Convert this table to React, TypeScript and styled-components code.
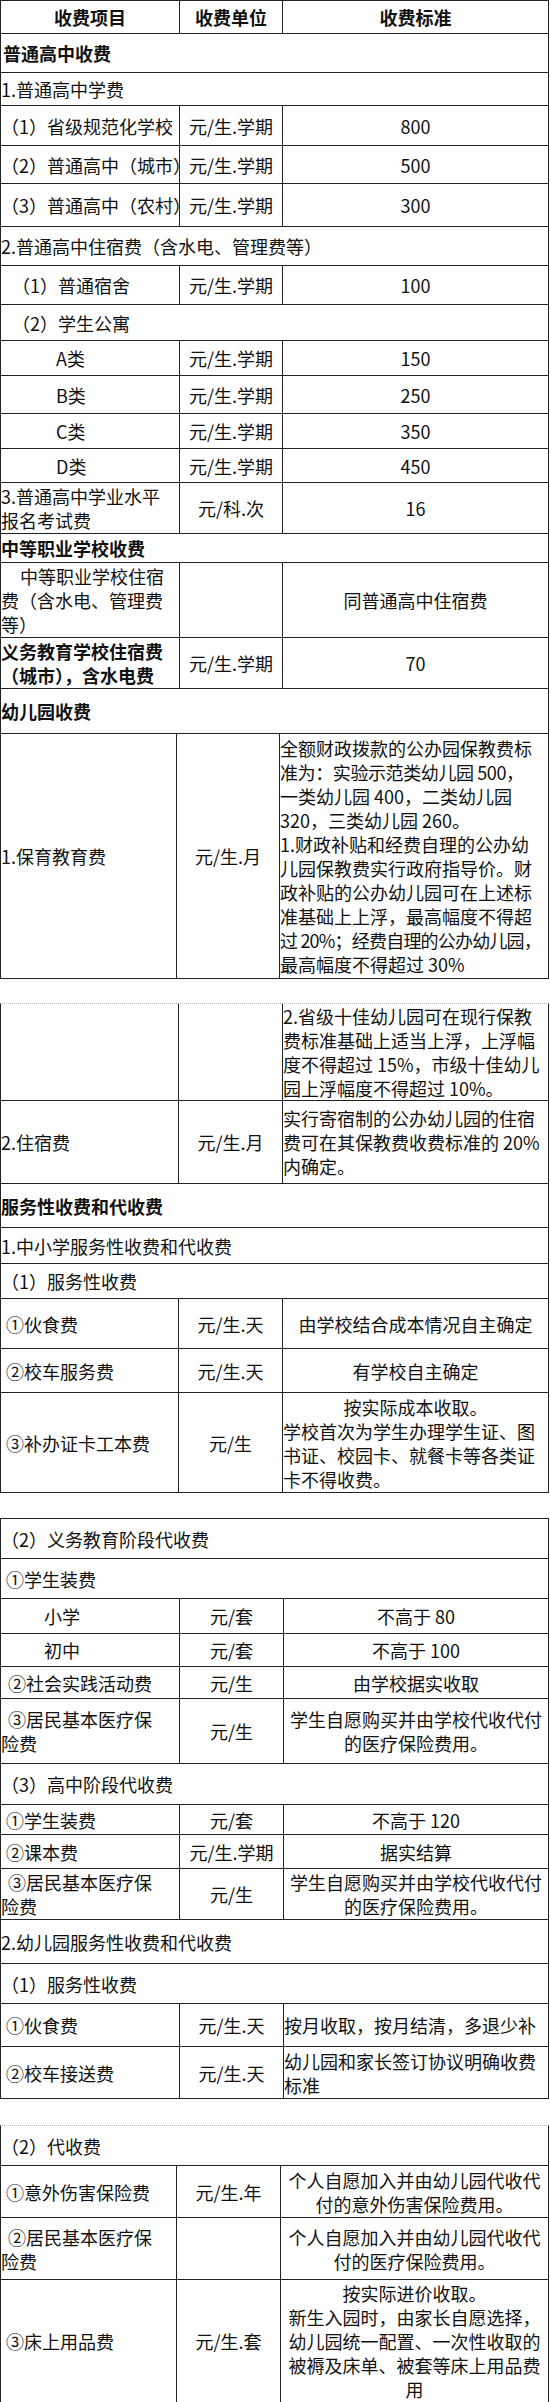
import React from "react";
import styled, { createGlobalStyle, css } from "styled-components";

const GlobalStyle = createGlobalStyle`
  html, body {
    margin: 0;
    padding: 0;
    background: #fff;
  }
  body {
    font-family: "Noto Sans CJK SC", "Noto Sans", sans-serif;
    color: #111;
  }
`;

const Page = styled.div`
  width: 550px;
  font-size: 18px;
  line-height: 24px;
`;

const Table = styled.div<{ $cols: string; $top?: "solid" | "dotted" }>`
  --cols: ${(p) => p.$cols};
  width: 549px;
  box-sizing: border-box;
  border-left: 1px solid #222;
  border-right: 1px solid #222;
  ${(p) =>
    p.$top === "solid" &&
    css`
      border-top: 1px solid #222;
    `}
  ${(p) =>
    p.$top === "dotted" &&
    css`
      border-top: 1px dotted #b4b4b4;
    `}
`;

const Row = styled.div<{ $h: number }>`
  display: grid;
  grid-template-columns: var(--cols);
  height: ${(p) => p.$h}px;
  box-sizing: border-box;
  border-bottom: 1px solid #222;
`;

const Cell = styled.div<{
  $align?: "left" | "center";
  $indent?: number;
  $bold?: boolean;
  $span?: boolean;
}>`
  display: flex;
  flex-direction: column;
  justify-content: center;
  min-width: 0;
  box-sizing: border-box;
  padding-left: ${(p) => p.$indent ?? 0}px;
  text-align: ${(p) => p.$align ?? "left"};
  font-weight: ${(p) => (p.$bold ? 700 : 400)};
  white-space: nowrap;
  border-right: 1px solid #222;
  &:last-child {
    border-right: none;
  }
  ${(p) =>
    p.$span &&
    css`
      grid-column: 1 / -1;
    `}
`;

const Line = styled.div<{ $indent?: number; $squeeze?: number; $center?: boolean }>`
  padding-left: ${(p) => p.$indent ?? 0}px;
  letter-spacing: ${(p) => p.$squeeze ?? 0}px;
  ${(p) =>
    p.$center &&
    css`
      text-align: center;
    `}
`;

const Gap = styled.div<{ $h: number }>`
  height: ${(p) => p.$h}px;
`;

const unitCell = (text: string) => <Cell $align="center">{text}</Cell>;

export default function App() {
  return (
    <Page lang="zh-CN">
      <GlobalStyle />

      <Table $cols="179px 103px 1fr" $top="solid">
        <Row $h={33}>
          <Cell $align="center" $bold>收费项目</Cell>
          <Cell $align="center" $bold>收费单位</Cell>
          <Cell $align="center" $bold>收费标准</Cell>
        </Row>
        <Row $h={39}>
          <Cell $span $bold $indent={2}>普通高中收费</Cell>
        </Row>
        <Row $h={33}>
          <Cell $span>1.普通高中学费</Cell>
        </Row>
        <Row $h={40}>
          <Cell>（1）省级规范化学校</Cell>
          {unitCell("元/生.学期")}
          <Cell $align="center">800</Cell>
        </Row>
        <Row $h={38}>
          <Cell>（2）普通高中（城市）</Cell>
          {unitCell("元/生.学期")}
          <Cell $align="center">500</Cell>
        </Row>
        <Row $h={43}>
          <Cell>（3）普通高中（农村）</Cell>
          {unitCell("元/生.学期")}
          <Cell $align="center">300</Cell>
        </Row>
        <Row $h={39}>
          <Cell $span>2.普通高中住宿费（含水电、管理费等）</Cell>
        </Row>
        <Row $h={39}>
          <Cell $indent={11}>（1）普通宿舍</Cell>
          {unitCell("元/生.学期")}
          <Cell $align="center">100</Cell>
        </Row>
        <Row $h={36}>
          <Cell $span $indent={11}>（2）学生公寓</Cell>
        </Row>
        <Row $h={35}>
          <Cell $indent={55}>A类</Cell>
          {unitCell("元/生.学期")}
          <Cell $align="center">150</Cell>
        </Row>
        <Row $h={38}>
          <Cell $indent={55}>B类</Cell>
          {unitCell("元/生.学期")}
          <Cell $align="center">250</Cell>
        </Row>
        <Row $h={35}>
          <Cell $indent={55}>C类</Cell>
          {unitCell("元/生.学期")}
          <Cell $align="center">350</Cell>
        </Row>
        <Row $h={34}>
          <Cell $indent={55}>D类</Cell>
          {unitCell("元/生.学期")}
          <Cell $align="center">450</Cell>
        </Row>
        <Row $h={51}>
          <Cell>
            <Line>3.普通高中学业水平</Line>
            <Line>报名考试费</Line>
          </Cell>
          {unitCell("元/科.次")}
          <Cell $align="center">16</Cell>
        </Row>
        <Row $h={29}>
          <Cell $span $bold>中等职业学校收费</Cell>
        </Row>
        <Row $h={75}>
          <Cell>
            <Line $indent={19}>中等职业学校住宿</Line>
            <Line>费（含水电、管理费</Line>
            <Line>等）</Line>
          </Cell>
          <Cell />
          <Cell $align="center">同普通高中住宿费</Cell>
        </Row>
        <Row $h={51}>
          <Cell $bold>
            <Line>义务教育学校住宿费</Line>
            <Line>（城市），含水电费</Line>
          </Cell>
          {unitCell("元/生.学期")}
          <Cell $align="center">70</Cell>
        </Row>
      </Table>

      <Table $cols="176px 103px 1fr">
        <Row $h={45}>
          <Cell $span $bold>幼儿园收费</Cell>
        </Row>
        <Row $h={245}>
          <Cell>1.保育教育费</Cell>
          {unitCell("元/生.月")}
          <Cell>
            <Line>全额财政拨款的公办园保教费标</Line>
            <Line $squeeze={-0.4}>准为：实验示范类幼儿园 500，</Line>
            <Line>一类幼儿园 400，二类幼儿园</Line>
            <Line>320，三类幼儿园 260。</Line>
            <Line>1.财政补贴和经费自理的公办幼</Line>
            <Line>儿园保教费实行政府指导价。财</Line>
            <Line>政补贴的公办幼儿园可在上述标</Line>
            <Line>准基础上上浮，最高幅度不得超</Line>
            <Line $squeeze={-0.8}>过 20%；经费自理的公办幼儿园，</Line>
            <Line>最高幅度不得超过 30%</Line>
          </Cell>
        </Row>
      </Table>

      <Gap $h={24} />

      <Table $cols="178px 104px 1fr" $top="dotted">
        <Row $h={97}>
          <Cell />
          <Cell />
          <Cell>
            <Line>2.省级十佳幼儿园可在现行保教</Line>
            <Line>费标准基础上适当上浮，上浮幅</Line>
            <Line>度不得超过 15%，市级十佳幼儿</Line>
            <Line>园上浮幅度不得超过 10%。</Line>
          </Cell>
        </Row>
        <Row $h={83}>
          <Cell>2.住宿费</Cell>
          {unitCell("元/生.月")}
          <Cell>
            <Line>实行寄宿制的公办幼儿园的住宿</Line>
            <Line>费可在其保教费收费标准的 20%</Line>
            <Line>内确定。</Line>
          </Cell>
        </Row>
        <Row $h={44}>
          <Cell $span $bold>服务性收费和代收费</Cell>
        </Row>
        <Row $h={36}>
          <Cell $span>1.中小学服务性收费和代收费</Cell>
        </Row>
        <Row $h={35}>
          <Cell $span>（1）服务性收费</Cell>
        </Row>
        <Row $h={50}>
          <Cell $indent={5}>①伙食费</Cell>
          {unitCell("元/生.天")}
          <Cell $align="center">由学校结合成本情况自主确定</Cell>
        </Row>
        <Row $h={44}>
          <Cell $indent={5}>②校车服务费</Cell>
          {unitCell("元/生.天")}
          <Cell $align="center">有学校自主确定</Cell>
        </Row>
        <Row $h={100}>
          <Cell $indent={5}>③补办证卡工本费</Cell>
          {unitCell("元/生")}
          <Cell>
            <Line $center>按实际成本收取。</Line>
            <Line>学校首次为学生办理学生证、图</Line>
            <Line>书证、校园卡、就餐卡等各类证</Line>
            <Line>卡不得收费。</Line>
          </Cell>
        </Row>
      </Table>

      <Gap $h={25} />

      <Table $cols="179px 104px 1fr" $top="solid">
        <Row $h={40}>
          <Cell $span>（2）义务教育阶段代收费</Cell>
        </Row>
        <Row $h={40}>
          <Cell $span $indent={5}>①学生装费</Cell>
        </Row>
        <Row $h={35}>
          <Cell $indent={43}>小学</Cell>
          {unitCell("元/套")}
          <Cell $align="center">不高于 80</Cell>
        </Row>
        <Row $h={33}>
          <Cell $indent={43}>初中</Cell>
          {unitCell("元/套")}
          <Cell $align="center">不高于 100</Cell>
        </Row>
        <Row $h={32}>
          <Cell $indent={7}>②社会实践活动费</Cell>
          {unitCell("元/生")}
          <Cell $align="center">由学校据实收取</Cell>
        </Row>
        <Row $h={65}>
          <Cell>
            <Line $indent={7}>③居民基本医疗保</Line>
            <Line>险费</Line>
          </Cell>
          {unitCell("元/生")}
          <Cell $align="center">
            <Line>学生自愿购买并由学校代收代付</Line>
            <Line>的医疗保险费用。</Line>
          </Cell>
        </Row>
        <Row $h={41}>
          <Cell $span>（3）高中阶段代收费</Cell>
        </Row>
        <Row $h={30}>
          <Cell $indent={5}>①学生装费</Cell>
          {unitCell("元/套")}
          <Cell $align="center">不高于 120</Cell>
        </Row>
        <Row $h={34}>
          <Cell $indent={5}>②课本费</Cell>
          {unitCell("元/生.学期")}
          <Cell $align="center">据实结算</Cell>
        </Row>
        <Row $h={51}>
          <Cell>
            <Line $indent={7}>③居民基本医疗保</Line>
            <Line>险费</Line>
          </Cell>
          {unitCell("元/生")}
          <Cell $align="center">
            <Line>学生自愿购买并由学校代收代付</Line>
            <Line>的医疗保险费用。</Line>
          </Cell>
        </Row>
        <Row $h={44}>
          <Cell $span>2.幼儿园服务性收费和代收费</Cell>
        </Row>
        <Row $h={40}>
          <Cell $span>（1）服务性收费</Cell>
        </Row>
        <Row $h={43}>
          <Cell $indent={5}>①伙食费</Cell>
          {unitCell("元/生.天")}
          <Cell>按月收取，按月结清，多退少补</Cell>
        </Row>
        <Row $h={52}>
          <Cell $indent={5}>②校车接送费</Cell>
          {unitCell("元/生.天")}
          <Cell>
            <Line>幼儿园和家长签订协议明确收费</Line>
            <Line>标准</Line>
          </Cell>
        </Row>
      </Table>

      <Gap $h={26} />

      <Table $cols="176px 104px 1fr" $top="dotted">
        <Row $h={40}>
          <Cell $span>（2）代收费</Cell>
        </Row>
        <Row $h={52}>
          <Cell $indent={5}>①意外伤害保险费</Cell>
          {unitCell("元/生.年")}
          <Cell $align="center">
            <Line>个人自愿加入并由幼儿园代收代</Line>
            <Line>付的意外伤害保险费用。</Line>
          </Cell>
        </Row>
        <Row $h={62}>
          <Cell>
            <Line $indent={7}>②居民基本医疗保</Line>
            <Line>险费</Line>
          </Cell>
          <Cell />
          <Cell $align="center">
            <Line>个人自愿加入并由幼儿园代收代</Line>
            <Line>付的医疗保险费用。</Line>
          </Cell>
        </Row>
        <Row $h={123}>
          <Cell $indent={5}>③床上用品费</Cell>
          {unitCell("元/生.套")}
          <Cell $align="center">
            <Line>按实际进价收取。</Line>
            <Line>新生入园时，由家长自愿选择，</Line>
            <Line>幼儿园统一配置、一次性收取的</Line>
            <Line>被褥及床单、被套等床上用品费</Line>
            <Line>用</Line>
          </Cell>
        </Row>
      </Table>
    </Page>
  );
}
